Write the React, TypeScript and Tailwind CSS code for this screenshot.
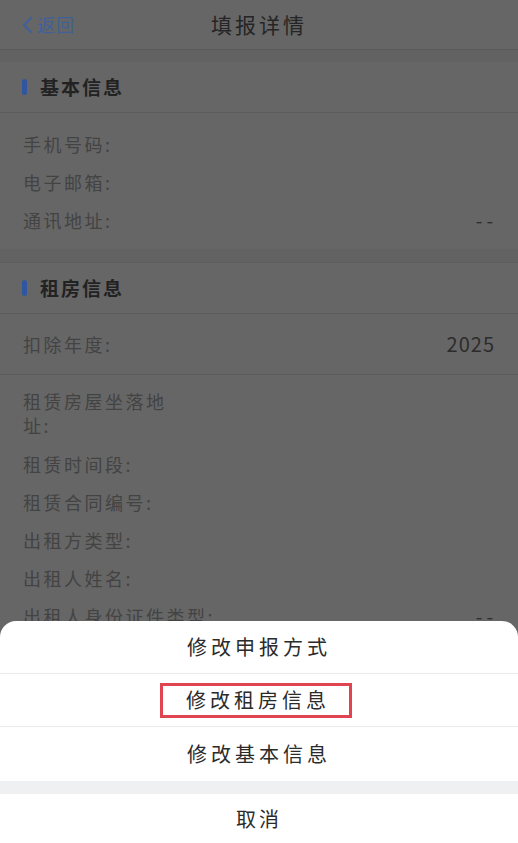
import React from "react";

const font = { fontFamily: '"Noto Sans CJK SC", "Noto Sans", sans-serif' };

function SectionHeader({ title }: { title: string }) {
	return (
		<div className="h-[51px] flex items-center px-[22px] border-b border-[#5c5c5c]">
			<span className="w-[5px] h-[16px] rounded-full bg-[#2f56a0] mr-[13px]" />
			<span className="text-[19px] font-bold tracking-[2px] text-[#222222]">{title}</span>
		</div>
	);
}

function Row({ label, value }: { label: React.ReactNode; value?: string }) {
	return (
		<div className="flex items-center justify-between px-[23px] min-h-[38px]">
			<span className="text-[18px] tracking-[2.5px] text-[#434343] leading-[24px]">{label}</span>
			{value === "--" && <span className="text-[19px] tracking-[4px] -mr-[2px] text-[#2c2c2c]">--</span>}
			{value && value !== "--" && <span className="text-[20px] tracking-[1px] text-[#2c2c2c]">{value}</span>}
		</div>
	);
}

export default function App() {
	return (
		<div className="relative w-[518px] h-[843px] overflow-hidden bg-[#666666]" style={font}>
			{/* nav */}
			<div className="h-[50px] flex items-center relative border-b border-[#5b5b5b]">
				<div className="flex items-center pl-[19px] text-[#40609a]">
					<svg width="16" height="20" viewBox="0 0 16 20" fill="none">
						<path d="M12 3 L5 10 L12 17" stroke="currentColor" strokeWidth="2.2" strokeLinecap="round" strokeLinejoin="round" />
					</svg>
					<span className="text-[18px] tracking-[1px] ml-[2px]">返回</span>
				</div>
				<div className="absolute left-0 right-0 text-center text-[21px] tracking-[3px] text-[#252525] pointer-events-none">
					填报详情
				</div>
			</div>
			<div className="h-[12px] bg-[#626262]" />

			<SectionHeader title="基本信息" />
			<div className="pt-[12px] pb-[10px] flex flex-col">
				<Row label="手机号码:" />
				<Row label="电子邮箱:" />
				<Row label="通讯地址:" value="--" />
			</div>
			<div className="h-[14px] bg-[#626262] border-b border-[#5c5c5c]" />

			<SectionHeader title="租房信息" />
			<div className="h-[61px] flex items-center border-b border-[#5c5c5c]">
				<div className="w-full">
					<Row label="扣除年度:" value="2025" />
				</div>
			</div>
			<div className="pt-[14px] flex flex-col">
				<div className="px-[23px] pb-[8px]">
					<div className="text-[18px] tracking-[2.5px] text-[#434343] leading-[24px] w-[160px]">租赁房屋坐落地址:</div>
				</div>
				<Row label="租赁时间段:" />
				<Row label="租赁合同编号:" />
				<Row label="出租方类型:" />
				<Row label="出租人姓名:" />
				<Row label="出租人身份证件类型:" value="--" />
			</div>

			{/* action sheet */}
			<div className="absolute left-0 right-0 bottom-0 bg-white rounded-t-[16px] flex flex-col">
				<div className="h-[53px] flex items-center justify-center border-b border-[#ebebeb] text-[20px] tracking-[4px] text-[#2b2b2b]">
					修改申报方式
				</div>
				<div className="h-[53px] flex items-center justify-center border-b border-[#ebebeb]">
					<span className="border-[3px] border-[#df4450] h-[35px] w-[192px] mr-[6px] flex items-center justify-center text-[20px] tracking-[4px] text-[#2b2b2b] pl-[4px]">
						修改租房信息
					</span>
				</div>
				<div className="h-[54px] flex items-center justify-center text-[20px] tracking-[4px] text-[#2b2b2b]">
					修改基本信息
				</div>
				<div className="h-[13px] bg-[#eff0f2]" />
				<div className="h-[49px] flex items-center justify-center text-[20px] tracking-[3px] text-[#2b2b2b]">
					取消
				</div>
			</div>
		</div>
	);
}
